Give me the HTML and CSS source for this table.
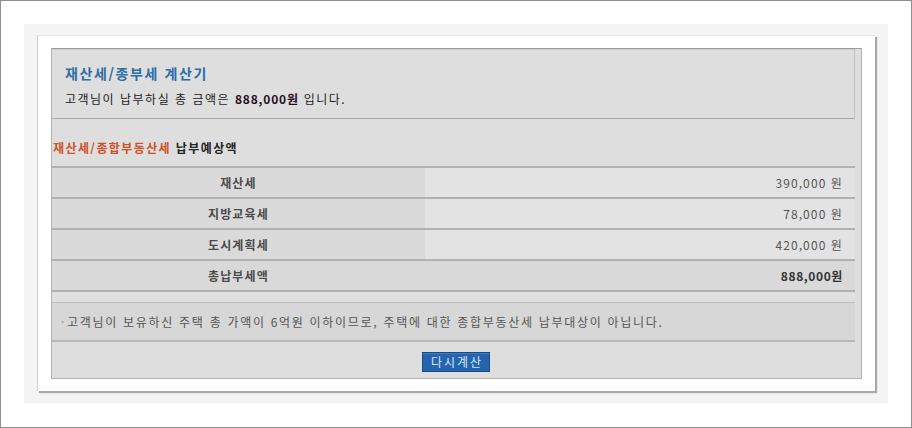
FILE: index.html
```html
<!DOCTYPE html>
<html lang="ko">
<head>
<meta charset="utf-8">
<link rel="stylesheet" href="styles.css">
</head>
<body>
<div class="frame">
  <div class="panel">
    <div class="card">
      <div class="inner">
        <div class="header">
          <div class="title">재산세/종부세 계산기</div>
          <div class="subtitle">고객님이 납부하실 총 금액은 <b class="amount">888,000원</b> 입니다.</div>
        </div>
        <div class="section"><span class="accent">재산세/종합부동산세</span> 납부예상액</div>
        <div class="table">
          <div class="row"><div class="label">재산세</div><div class="value">390,000 원</div></div>
          <div class="row"><div class="label">지방교육세</div><div class="value">78,000 원</div></div>
          <div class="row"><div class="label">도시계획세</div><div class="value">420,000 원</div></div>
          <div class="row total"><div class="label">총납부세액</div><div class="value">888,000원</div></div>
        </div>
        <div class="spacer"></div>
        <div class="notice"><span class="dot">·</span>고객님이 보유하신 주택 총 가액이 6억원 이하이므로, 주택에 대한 종합부동산세 납부대상이 아닙니다.</div>
        <div class="actions"><button class="btn" type="button">다시계산</button></div>
      </div>
    </div>
  </div>
</div>
</body>
</html>
```
FILE: styles.css
```css
* { box-sizing: border-box; }
html, body { margin: 0; padding: 0; background: #fff; }
body { font-family: "Noto Sans CJK KR", "Noto Sans", sans-serif; font-size: 12px; color: #333; }

.frame {
  width: 912px;
  height: 428px;
  border: 1px solid #8e8e8e;
  padding: 23px;
  background: #fff;
}
.panel {
  width: 864px;
  height: 379px;
  background: #f4f4f4;
  padding: 11px 13px 0 13px;
}
.card {
  width: 838px;
  height: 356px;
  background: #fff;
  border-left: 1px solid #d0d0d0;
  border-top: 1px solid #e8e8e8;
  box-shadow: 2px 2px 1px #a9a9a9;
  padding: 12px 13px 0 13px;
}
.inner {
  width: 811px;
  height: 331px;
  background: #dedede;
  border: 1px solid #b3b3b3;
  border-top-color: #9c9c9c;
  padding-right: 6px;
  display: flex;
  flex-direction: column;
}
.header {
  height: 70px;
  border-bottom: 1px solid #a8a8a8;
  border-right: 1px solid #c2c2c2;
  box-shadow: inset 0 1px 0 #cfcfcf;
  padding: 14px 0 0 13px;
}
.title {
  font-size: 14px;
  font-weight: bold;
  color: #2c6da6;
  line-height: 20px;
  letter-spacing: 1.6px;
}
.subtitle {
  margin-top: 7px;
  line-height: 18px;
  color: #222;
  letter-spacing: 1.5px;
}
.amount { color: #2a0e24; letter-spacing: 0.8px; }
.section {
  height: 47px;
  padding: 20px 0 0 1px;
  font-weight: bold;
  color: #222;
  line-height: 18px;
  letter-spacing: 1.4px;
}
.accent { color: #cf5126; }
.table { display: flex; flex-direction: column; }
.row {
  display: flex;
  height: 31px;
  border-top: 2px solid #b1b1b1;
}
.row .label {
  width: 373px;
  background: #dadada;
  text-align: center;
  font-weight: bold;
  color: #4a4a4a;
  line-height: 29px;
  letter-spacing: 1.2px;
}
.row .value {
  flex: 1;
  background: #e3e3e3;
  text-align: right;
  padding-right: 12px;
  color: #555;
  line-height: 29px;
  letter-spacing: 1.1px;
}
.row.total .label, .row.total .value { background: #d9d9d9; }
.row.total .value { font-weight: bold; color: #333; letter-spacing: 0.6px; }
.spacer {
  height: 12px;
  border-top: 2px solid #b1b1b1;
  background: #e0e0e0;
}
.notice {
  height: 40px;
  border-top: 1px solid #bdbdbd;
  border-bottom: 2px solid #b8b8b8;
  background: #d7d7d7;
  padding-left: 9px;
  line-height: 38px;
  color: #555;
  letter-spacing: 1.7px;
}
.dot { color: #999; margin-right: 1px; }
.actions {
  flex: 1;
  display: flex;
  justify-content: center;
  align-items: flex-start;
  padding-top: 10px;
  padding-left: 5px;
}
.btn {
  width: 68px;
  height: 20px;
  background: #2565af;
  border: 1px solid #1a4a86;
  color: #d8e6f6;
  font-family: inherit;
  font-size: 12px;
  line-height: 16px;
  padding: 0 0 0 2px;
  letter-spacing: 2px;
  box-shadow: inset 0 1px 0 #3d7cc2;
}
```
